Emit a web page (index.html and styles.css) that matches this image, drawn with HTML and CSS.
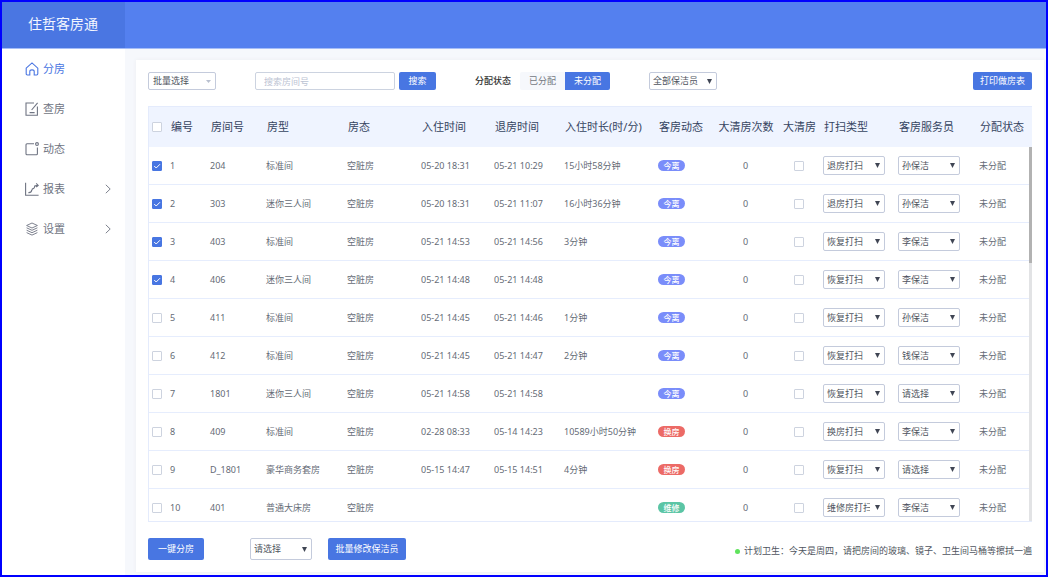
FILE: index.html
```
<!DOCTYPE html>
<html lang="zh-CN">
<head>
    <meta charset="UTF-8">
    <meta name="viewport" content="width=device-width, initial-scale=1.0">
    <title>住哲客房通</title>
    <link rel="stylesheet" href="styles.css">
</head>
<body>
    <header class="header">
        <h1 class="logo">住哲客房通</h1>
    </header>

    <div class="main">
        <!-- Side menu -->
        <nav class="sidebar">
            <a class="menu-item active" href="#">
                <svg class="menu-icon" viewBox="0 0 14 14"><path d="M1.2 6.2 7 .9l5.8 5.3v5.6q0 1.2-1.2 1.2H9.2V9.4q0-1.5-2.2-1.5T4.8 9.4V13H2.4q-1.2 0-1.2-1.2z"/></svg>
                <span>分房</span>
            </a>
            <a class="menu-item" href="#">
                <svg class="menu-icon" viewBox="0 0 14 14"><path d="M9 1H1v12.3h11.4V4.6M12.6.8 6.6 8M4.6 10.6h5"/></svg>
                <span>查房</span>
            </a>
            <a class="menu-item" href="#">
                <svg class="menu-icon" viewBox="0 0 14 14"><path d="M9 1.8H2q-1 0-1 1v9q0 1 1 1h9.4q1 0 1-1V5.4"/><circle cx="12" cy="2" r="1.4"/></svg>
                <span>动态</span>
            </a>
            <a class="menu-item" href="#">
                <svg class="menu-icon" viewBox="0 0 14 14"><path d="M.6.8v12.4h13M3.4 10.6q3 .2 3.4-2.4.2-1.6 1.8-1.8Q9.600 6 9.600 4.400q0-1 3.400-1M11.200 1.400l2 2-2 1.600"/></svg>
                <span>报表</span>
                <svg class="menu-arrow" viewBox="0 0 6 10"><path d="m.8.8 4.400 4.200L.8 9.200"/></svg>
            </a>
            <a class="menu-item" href="#">
                <svg class="menu-icon layers" viewBox="0 0 14 14"><path d="M7 1 1.600 3.500 7 6l5.400-2.500zM1.600 5.800 7 8.300l5.400-2.500M1.600 8.200 7 10.700l5.400-2.500M1.600 10.600 7 13.100l5.400-2.500"/></svg>
                <span>设置</span>
                <svg class="menu-arrow" viewBox="0 0 6 10"><path d="m.8.8 4.400 4.200L.8 9.200"/></svg>
            </a>
        </nav>

        <section class="card">
            <!-- Filters -->
            <div class="toolbar">
                <select class="select select-wide select-light" aria-label="批量选择">
                    <option>批量选择</option>
                </select>
                <form class="search">
                    <input class="search-input" type="text" placeholder="搜索房间号" aria-label="搜索房间号">
                    <button class="btn btn-small" type="button">搜索</button>
                </form>
                <div class="status">
                    <span class="status-label" id="status_label">分配状态</span>
                    <div class="toggle" role="group" aria-labelledby="status_label">
                        <button class="toggle-btn" type="button">已分配</button>
                        <button class="toggle-btn selected" type="button">未分配</button>
                    </div>
                </div>
                <select class="select select-wide" aria-label="全部保洁员">
                    <option>全部保洁员</option>
                    <option>孙保洁</option>
                    <option>李保洁</option>
                    <option>钱保洁</option>
                </select>
                <button class="btn btn-print" type="button">打印做房表</button>
            </div>

            <!-- Room list -->
            <div class="table-wrap">
                <table class="rooms">
                    <colgroup>
                        <col class="c-check"><col class="c-no"><col class="c-room"><col class="c-type"><col class="c-state">
                        <col class="c-in"><col class="c-out"><col class="c-stay"><col class="c-move"><col class="c-count">
                        <col class="c-deep"><col class="c-clean"><col class="c-staff"><col class="c-status">
                    </colgroup>
                    <thead>
                        <tr>
                            <th class="check"><input type="checkbox" class="box" aria-label="全部"></th>
                            <th>编号</th>
                            <th>房间号</th>
                            <th>房型</th>
                            <th>房态</th>
                            <th>入住时间</th>
                            <th>退房时间</th>
                            <th>入住时长(时/分)</th>
                            <th>客房动态</th>
                            <th class="center">大清房次数</th>
                            <th class="center">大清房</th>
                            <th>打扫类型</th>
                            <th>客房服务员</th>
                            <th>分配状态</th>
                        </tr>
                    </thead>
                    <tbody id="rooms"></tbody>
                </table>
                <div class="scroll-track"><div class="scroll-thumb"></div></div>
            </div>

            <!-- Bulk actions -->
            <div class="footer">
                <button class="btn btn-assign" type="button">一键分房</button>
                <select class="select select-tall" aria-label="保洁员">
                    <option>请选择</option>
                    <option>孙保洁</option>
                    <option>李保洁</option>
                    <option>钱保洁</option>
                </select>
                <button class="btn btn-bulk" type="button">批量修改保洁员</button>
                <p class="plan">计划卫生：今天是周四，请把房间的玻璃、镜子、卫生间马桶等擦拭一遍</p>
            </div>
        </section>
    </div>

    <script src="rooms.js"></script>
</body>
</html>
```

FILE: styles.css
```
* {
    box-sizing: border-box;
}
body {
    display: flex;
    flex-direction: column;
    height: 100vh;
    margin: 0;
    border: 2px solid #0000ff;
    background: #f6f8fc;
    color: #656b76;
    font-family: "Noto Sans", "Noto Sans CJK SC", sans-serif;
    font-size: 9px;
    line-height: 14px;
}
button, input, select {
    margin: 0;
    font: inherit;
}

/* Header */
.header {
    flex: none;
    background: #5480ef;
    border-bottom: 1px solid #a5bdf8;
}
.logo {
    width: 123px;
    margin: 0;
    padding: 0 0 2px 26px;
    background: #4a76e2;
    color: #f4f7ff;
    font-size: 14px;
    font-weight: 400;
    line-height: 44px;
}

.main {
    display: flex;
    flex: 1;
    min-height: 0;
}

/* Side menu */
.sidebar {
    flex: none;
    width: 123px;
    background: #fff;
}
.menu-item {
    display: flex;
    align-items: center;
    gap: 4px;
    height: 40px;
    padding: 0 14px 0 23px;
    color: #6f7482;
    font-size: 11px;
    text-decoration: none;
}
.menu-item.active {
    color: #4a76e2;
}
.menu-icon {
    width: 14px;
    height: 14px;
    fill: none;
    stroke: currentColor;
    stroke-width: 1.1;
}
.layers {
    stroke-width: 0.9;
}
.menu-arrow {
    width: 6px;
    height: 10px;
    margin-left: auto;
    fill: none;
    stroke: #7d828d;
}

/* Content */
.card {
    display: flex;
    flex: 1;
    flex-direction: column;
    gap: 16px;
    min-width: 0;
    margin: 11px 2px 3px 11px;
    padding: 12px;
    background: #fff;
    box-shadow: 0 0 4px #eceef2;
}
.toolbar {
    display: flex;
    align-items: center;
    gap: 39px;
    height: 18px;
}
.btn {
    padding: 0;
    border: 0;
    border-radius: 2px;
    background: #4876e2;
    color: #fff;
}
.btn-small {
    width: 37px;
    height: 18px;
}
.btn-print {
    width: 59px;
    height: 18px;
    margin-left: auto;
}
.search {
    display: flex;
    gap: 4px;
}
.search-input {
    width: 140px;
    height: 18px;
    padding: 0 8px;
    border: 1px solid #ccd3e0;
    border-radius: 2px;
    color: #5f6570;
}
.search-input::placeholder {
    color: #bcc3d3;
}
.status {
    display: flex;
    align-items: center;
    gap: 9px;
}
.status-label {
    color: #333;
    font-weight: 500;
}
.toggle {
    display: flex;
}
.toggle-btn {
    width: 45px;
    height: 18px;
    padding: 0;
    border: 0;
    border-radius: 2px 0 0 2px;
    background: #f6f8fc;
    color: #73777f;
}
.toggle-btn.selected {
    border-radius: 0 2px 2px 0;
    background: #4876e2;
    color: #fff;
}

.select {
    display: block;
    appearance: none;
    width: 62px;
    height: 19px;
    padding: 0 14px 0 3px;
    border: 1px solid #c4cbdc;
    border-radius: 2px;
    background: #fff url("data:image/svg+xml,%3Csvg xmlns='http://www.w3.org/2000/svg' width='5' height='5'%3E%3Cpath d='M0 0h5L2.500 5z' fill='%23404654'/%3E%3C/svg%3E") no-repeat right 4px center;
    color: #4f5560;
}
.select-wide {
    width: 68px;
    height: 18px;
}
.select-light {
    padding-left: 4px;
    background-image: url("data:image/svg+xml,%3Csvg xmlns='http://www.w3.org/2000/svg' width='5' height='5'%3E%3Cpath d='M0 1h5L2.500 4z' fill='%23b9c0cf'/%3E%3C/svg%3E");
}
.select-tall {
    height: 22px;
}

/* Room list */
.table-wrap {
    position: relative;
    flex: 1;
    min-height: 0;
    overflow: hidden;
    border: 1px solid #e4ebfc;
    border-right: 0;
}
.rooms {
    width: 100%;
    table-layout: fixed;
    border-collapse: separate;
    border-spacing: 0;
}
.rooms th {
    height: 40px;
    padding: 0 0 0 1px;
    background: #eff4ff;
    color: #36445f;
    font-size: 11px;
    font-weight: 400;
    text-align: left;
    white-space: nowrap;
}
.rooms td {
    height: 38px;
    padding: 0;
    border-bottom: 1px solid #e6edfd;
    white-space: nowrap;
}
.rooms .check {
    padding-left: 3px;
}
.rooms .center {
    text-align: center;
}
.c-check { width: 21px; }
.c-no { width: 40px; }
.c-room { width: 56px; }
.c-type { width: 81px; }
.c-state { width: 74px; }
.c-in { width: 73px; }
.c-out { width: 70px; }
.c-stay { width: 94px; }
.c-move { width: 58px; }
.c-count { width: 59px; }
.c-deep { width: 48px; }
.c-clean { width: 75px; }
.c-staff { width: 81px; }
.c-status { width: 53px; }

.box {
    display: block;
    appearance: none;
    width: 10px;
    height: 10px;
    border: 1px solid #cdd3df;
    border-radius: 1px;
    background: #fff;
}
.center .box {
    margin: 0 auto;
}
.box:checked {
    border-color: #4876e2;
    background: #4876e2 url("data:image/svg+xml,%3Csvg xmlns='http://www.w3.org/2000/svg' width='8' height='8'%3E%3Cpath d='m1.200 4 2 2L7 2.200' fill='none' stroke='%23fff'/%3E%3C/svg%3E") no-repeat center;
}
.badge {
    display: block;
    width: 27px;
    border-radius: 6px;
    background: #7a8dfa;
    color: #fff;
    font-size: 8px;
    font-weight: 500;
    line-height: 11px;
    text-align: center;
}
.badge-red {
    background: #ec6a66;
}
.badge-green {
    background: #5bc5a5;
}
.scroll-track {
    position: absolute;
    top: 40px;
    right: 0;
    bottom: 0;
    width: 3px;
    background: #e2e3e5;
}
.scroll-thumb {
    height: 31%;
    background: #b2b2b2;
}

/* Bulk actions */
.footer {
    display: flex;
    align-items: center;
}
.btn-assign {
    width: 56px;
    height: 22px;
    margin-right: 46px;
}
.btn-bulk {
    width: 78px;
    height: 22px;
    margin-left: 16px;
}
.plan {
    display: flex;
    align-items: center;
    gap: 4px;
    margin: 4px 0 0 auto;
    color: #4f5560;
}
.plan::before {
    content: "";
    width: 5px;
    height: 5px;
    border-radius: 50%;
    background: #5fe35c;
}
```

FILE: rooms.js
```
var cleanTypes = ["退房打扫", "恢复打扫", "换房打扫", "维修房打扫"];
var staff = ["请选择", "孙保洁", "李保洁", "钱保洁"];
var badgeClass = { "今离": "", "换房": "badge-red", "维修": "badge-green" };

// room, type, check in, check out, stay, movement, cleaning, staff, checked
var rooms = [
    ["204", "标准间", "05-20 18:31", "05-21 10:29", "15小时58分钟", "今离", "退房打扫", "孙保洁", true],
    ["303", "迷你三人间", "05-20 18:31", "05-21 11:07", "16小时36分钟", "今离", "退房打扫", "孙保洁", true],
    ["403", "标准间", "05-21 14:53", "05-21 14:56", "3分钟", "今离", "恢复打扫", "李保洁", true],
    ["406", "迷你三人间", "05-21 14:48", "05-21 14:48", "", "今离", "恢复打扫", "李保洁", true],
    ["411", "标准间", "05-21 14:45", "05-21 14:46", "1分钟", "今离", "恢复打扫", "孙保洁", false],
    ["412", "标准间", "05-21 14:45", "05-21 14:47", "2分钟", "今离", "恢复打扫", "钱保洁", false],
    ["1801", "迷你三人间", "05-21 14:58", "05-21 14:58", "", "今离", "恢复打扫", "请选择", false],
    ["409", "标准间", "02-28 08:33", "05-14 14:23", "10589小时50分钟", "换房", "换房打扫", "李保洁", false],
    ["D_1801", "豪华商务套房", "05-15 14:47", "05-15 14:51", "4分钟", "换房", "恢复打扫", "请选择", false],
    ["401", "普通大床房", "", "", "", "维修", "维修房打扫", "李保洁", false]
];

function select(label, options, value) {
    var html = '<select class="select" aria-label="' + label + '">';
    options.forEach(function (option) {
        html += "<option" + (option === value ? " selected" : "") + ">" + option + "</option>";
    });
    return html + "</select>";
}

document.getElementById("rooms").innerHTML = rooms.map(function (r, i) {
    return "<tr>" +
        '<td class="check"><input type="checkbox" class="box" aria-label="' + r[0] + '"' + (r[8] ? " checked" : "") + "></td>" +
        "<td>" + (i + 1) + "</td>" +
        "<td>" + r[0] + "</td>" +
        "<td>" + r[1] + "</td>" +
        "<td>空脏房</td>" +
        "<td>" + r[2] + "</td>" +
        "<td>" + r[3] + "</td>" +
        "<td>" + r[4] + "</td>" +
        '<td><span class="badge ' + badgeClass[r[5]] + '">' + r[5] + "</span></td>" +
        '<td class="center">0</td>' +
        '<td class="center"><input type="checkbox" class="box" aria-label="大清房"></td>' +
        "<td>" + select("打扫类型", cleanTypes, r[6]) + "</td>" +
        "<td>" + select("客房服务员", staff, r[7]) + "</td>" +
        "<td>未分配</td>" +
        "</tr>";
}).join("");
```
